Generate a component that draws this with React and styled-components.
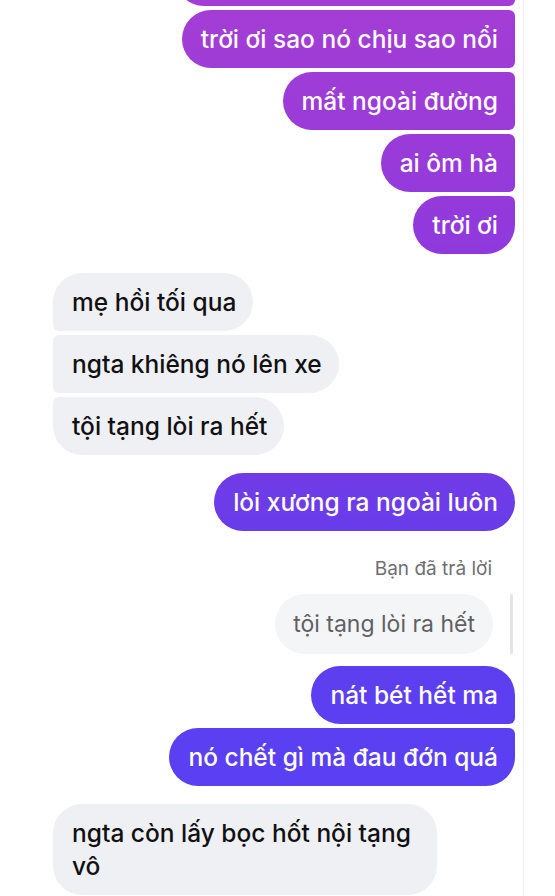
import React from "react";
import styled, { createGlobalStyle, css } from "styled-components";

const GlobalStyle = createGlobalStyle`
  html, body { margin: 0; padding: 0; background: #ffffff; }
  body { font-family: Inter, "Noto Sans", "Liberation Sans", sans-serif; }
  * { box-sizing: border-box; }
`;

const BIG = 29;
const SMALL = 6;

const Screen = styled.div`
  width: 524px;
  height: 896px;
  overflow: hidden;
  border-right: 1px solid #f0f0f2;
  padding: 0 8px 0 53px;
`;

const Thread = styled.div`
  display: flex;
  flex-direction: column;
  margin-top: -52px;
`;

const Group = styled.div`
  display: flex;
  flex-direction: column;
  gap: 4px;
  align-items: ${(p) => (p.$side === "out" ? "flex-end" : "flex-start")};
  margin-top: ${(p) => p.$top || 0}px;
`;

const radii = (side, pos) => {
  const outer = {
    single: [BIG, BIG],
    first: [BIG, SMALL],
    middle: [SMALL, SMALL],
    last: [SMALL, BIG],
  }[pos];
  if (side === "out") {
    return css`
      border-radius: ${BIG}px ${outer[0]}px ${outer[1]}px ${BIG}px;
    `;
  }
  return css`
    border-radius: ${outer[0]}px ${BIG}px ${BIG}px ${outer[1]}px;
  `;
};

const Bubble = styled.div`
  max-width: 384px;
  padding: 12.5px 17px 12.5px 19px;
  font-size: 24.5px;
  line-height: 33px;
  font-weight: 500;
  ${(p) => radii(p.$side, p.$pos)}
  ${(p) =>
    p.$side === "out"
      ? css`
          color: #ffffff;
          background: linear-gradient(
              180deg,
              #a43dd5 0%,
              #9a3bd8 15%,
              #8f39dd 28%,
              #7a3ae4 45%,
              #6a3ce9 58%,
              #5e3eef 72%,
              #5a40f2 85%,
              #5641f4 100%
            )
            fixed;
        `
      : css`
          color: #111114;
          background: #eff0f3;
        `}
`;

const Spacer = styled(Bubble)`
  width: 340px;
`;

const ReplyLabel = styled.div`
  align-self: flex-end;
  margin: 26px 23px 13px 0;
  font-size: 19px;
  line-height: 24px;
  color: #6f6f73;
  font-weight: 400;
`;

const ReplyRow = styled.div`
  display: flex;
  align-items: stretch;
  justify-content: flex-end;
  gap: 17px;
  padding-right: 2px;
`;

const QuoteBubble = styled.div`
  padding: 13.5px 18px;
  font-size: 23px;
  line-height: 33px;
  font-weight: 400;
  color: #5f6064;
  background: #f4f5f7;
  border-radius: 30px;
`;

const QuoteBar = styled.div`
  width: 3px;
  border-radius: 2px;
  background: #e3e4e8;
`;

export default function App() {
  return (
    <>
      <GlobalStyle />
      <Screen>
        <Thread>
          <Group $side="out">
            <Spacer $side="out" $pos="first" aria-hidden="true">&nbsp;</Spacer>
            <Bubble $side="out" $pos="middle">trời ơi sao nó chịu sao nổi</Bubble>
            <Bubble $side="out" $pos="middle">mất ngoài đường</Bubble>
            <Bubble $side="out" $pos="middle">ai ôm hà</Bubble>
            <Bubble $side="out" $pos="last">trời ơi</Bubble>
          </Group>
          <Group $side="in" $top={19}>
            <Bubble $side="in" $pos="first">mẹ hồi tối qua</Bubble>
            <Bubble $side="in" $pos="middle">ngta khiêng nó lên xe</Bubble>
            <Bubble $side="in" $pos="last">tội tạng lòi ra hết</Bubble>
          </Group>
          <Group $side="out" $top={18}>
            <Bubble $side="out" $pos="single">lòi xương ra ngoài luôn</Bubble>
          </Group>
          <ReplyLabel>Bạn đã trả lời</ReplyLabel>
          <ReplyRow>
            <QuoteBubble>tội tạng lòi ra hết</QuoteBubble>
            <QuoteBar />
          </ReplyRow>
          <Group $side="out" $top={12}>
            <Bubble $side="out" $pos="first">nát bét hết ma</Bubble>
            <Bubble $side="out" $pos="last">nó chết gì mà đau đớn quá</Bubble>
          </Group>
          <Group $side="in" $top={18}>
            <Bubble $side="in" $pos="single">ngta còn lấy bọc hốt nội tạng vô</Bubble>
          </Group>
        </Thread>
      </Screen>
    </>
  );
}
